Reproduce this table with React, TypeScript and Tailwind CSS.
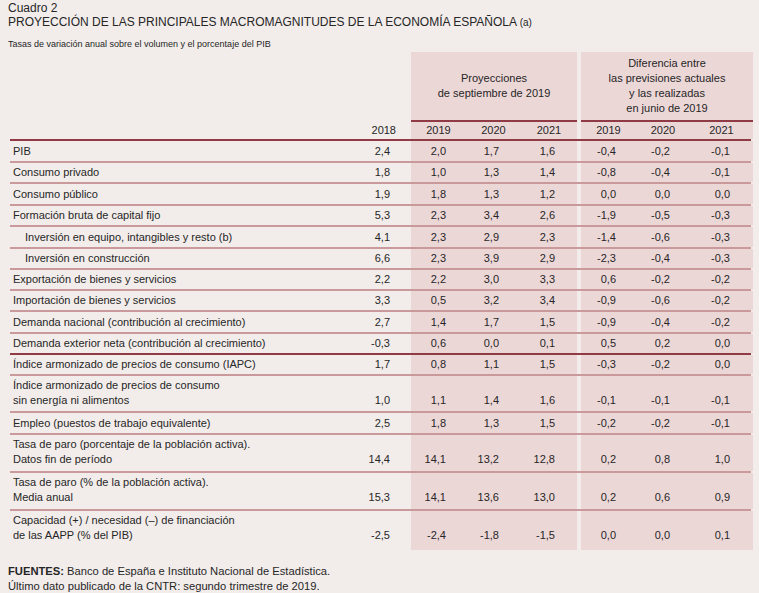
import { Fragment } from "react";

type Row = {
  label: string[];
  values: string[];
  h: string;
  indent?: boolean;
  dark?: boolean;
  last?: boolean;
};

const rows: Row[] = [
  { label: ["PIB"], values: ["2,4", "2,0", "1,7", "1,6", "-0,4", "-0,2", "-0,1"], h: "h-[22px]" },
  { label: ["Consumo privado"], values: ["1,8", "1,0", "1,3", "1,4", "-0,8", "-0,4", "-0,1"], h: "h-[21px]" },
  { label: ["Consumo público"], values: ["1,9", "1,8", "1,3", "1,2", "0,0", "0,0", "0,0"], h: "h-[22px]" },
  { label: ["Formación bruta de capital fijo"], values: ["5,3", "2,3", "3,4", "2,6", "-1,9", "-0,5", "-0,3"], h: "h-[21px]" },
  { label: ["Inversión en equipo, intangibles y resto (b)"], values: ["4,1", "2,3", "2,9", "2,3", "-1,4", "-0,6", "-0,3"], h: "h-[22px]", indent: true },
  { label: ["Inversión en construcción"], values: ["6,6", "2,3", "3,9", "2,9", "-2,3", "-0,4", "-0,3"], h: "h-[21px]", indent: true },
  { label: ["Exportación de bienes y servicios"], values: ["2,2", "2,2", "3,0", "3,3", "0,6", "-0,2", "-0,2"], h: "h-[21px]" },
  { label: ["Importación de bienes y servicios"], values: ["3,3", "0,5", "3,2", "3,4", "-0,9", "-0,6", "-0,2"], h: "h-[21px]" },
  { label: ["Demanda nacional (contribución al crecimiento)"], values: ["2,7", "1,4", "1,7", "1,5", "-0,9", "-0,4", "-0,2"], h: "h-[22px]" },
  { label: ["Demanda exterior neta (contribución al crecimiento)"], values: ["-0,3", "0,6", "0,0", "0,1", "0,5", "0,2", "0,0"], h: "h-[21px]", dark: true },
  { label: ["Índice armonizado de precios de consumo (IAPC)"], values: ["1,7", "0,8", "1,1", "1,5", "-0,3", "-0,2", "0,0"], h: "h-[21px]" },
  { label: ["Índice armonizado de precios de consumo", "sin energía ni alimentos"], values: ["1,0", "1,1", "1,4", "1,6", "-0,1", "-0,1", "-0,1"], h: "h-[37px]" },
  { label: ["Empleo (puestos de trabajo equivalente)"], values: ["2,5", "1,8", "1,3", "1,5", "-0,2", "-0,2", "-0,1"], h: "h-[22px]" },
  { label: ["Tasa de paro (porcentaje de la población activa).", "Datos fin de período"], values: ["14,4", "14,1", "13,2", "12,8", "0,2", "0,8", "1,0"], h: "h-[38px]" },
  { label: ["Tasa de paro (% de la población activa).", "Media anual"], values: ["15,3", "14,1", "13,6", "13,0", "0,2", "0,6", "0,9"], h: "h-[38px]" },
  { label: ["Capacidad (+) / necesidad (–) de financiación", "de las AAPP (% del PIB)"], values: ["-2,5", "-2,4", "-1,8", "-1,5", "0,0", "0,0", "0,1"], h: "h-[39px]", last: true },
];

const cols = "grid grid-cols-[330px_71px_55px_55px_56px_4px_55px_54px_63px]";
// right padding of each number column
const pads = ["pr-[21px]", "pr-[20px]", "pr-[22px]", "pr-[22px]", "pr-[20px]", "pr-[20px]", "pr-[23px]"];
const years = ["2019", "2020", "2021"];

function TableRow({ row }: { row: Row }) {
  const multi = row.label.length > 1;
  const cell = multi ? "pt-[2px]" : "flex items-center";
  const num = multi ? "pt-[17px] text-right" : "flex items-center justify-end";
  const border = row.last ? "" : row.dark ? "border-b-2 border-[#8f3a45]" : "border-b-2 border-[#c9999b]";

  return (
    <div className={`${cols} ${row.h} ${border}`}>
      <div className={`${cell} ${row.indent ? "pl-[15px]" : "pl-[3px]"}`}>
        <div>
          {row.label.map((l) => (
            <div key={l}>{l}</div>
          ))}
        </div>
      </div>
      {row.values.map((v, i) => (
        <Fragment key={i}>
          {i === 4 && <div />}
          <div className={`${num} ${pads[i]} ${i > 0 ? "bg-[#ecd7d7]" : ""}`}>{v}</div>
        </Fragment>
      ))}
    </div>
  );
}

export default function App() {
  return (
    <div className="w-[759px] h-[593px] overflow-hidden bg-[#f2edeb] text-[#262626] font-['Liberation_Sans',Arial,sans-serif] px-2 pt-px">
      <div className="text-[12px] leading-[14px]">
        <div>Cuadro 2</div>
        <div>
          PROYECCIÓN DE LAS PRINCIPALES MACROMAGNITUDES DE LA ECONOMÍA ESPAÑOLA <span className="text-[10px]">(a)</span>
        </div>
      </div>
      <div className="h-[22px] pt-[9px] text-[9px] leading-[10px]">
        Tasas de variación anual sobre el volumen y el porcentaje del PIB
      </div>

      {/* Table */}
      <div className="ml-[2px] text-[11px] leading-[15px]">
        <div className={`${cols} h-[70px]`}>
          <div className="col-span-2" />
          <div className="col-span-3 bg-[#ecd7d7] border-b-2 border-[#8f3a45] flex items-center justify-center text-center">
            <div>
              Proyecciones
              <br />
              de septiembre de 2019
            </div>
          </div>
          <div />
          <div className="col-span-3 bg-[#ecd7d7] border-b-2 border-[#8f3a45] flex items-center justify-center text-center">
            <div>
              Diferencia entre
              <br />
              las previsiones actuales
              <br />
              y las realizadas
              <br />
              en junio de 2019
            </div>
          </div>
        </div>
        <div className={`${cols} h-[19px] border-b-2 border-[#8f3a45]`}>
          <div />
          <div className="flex items-center justify-end pr-[15px]">2018</div>
          {years.map((y) => (
            <div key={"p" + y} className="bg-[#ecd7d7] flex items-center justify-center">
              {y}
            </div>
          ))}
          <div />
          {years.map((y) => (
            <div key={"d" + y} className="bg-[#ecd7d7] flex items-center justify-center">
              {y}
            </div>
          ))}
        </div>
        {rows.map((r) => (
          <TableRow key={r.label.join()} row={r} />
        ))}
      </div>

      {/* Footer */}
      <div className="mt-[14px] text-[11.2px] leading-[15px]">
        <div>
          <span className="font-bold">FUENTES:</span> Banco de España e Instituto Nacional de Estadística.
        </div>
        <div>Último dato publicado de la CNTR: segundo trimestre de 2019.</div>
      </div>
    </div>
  );
}
